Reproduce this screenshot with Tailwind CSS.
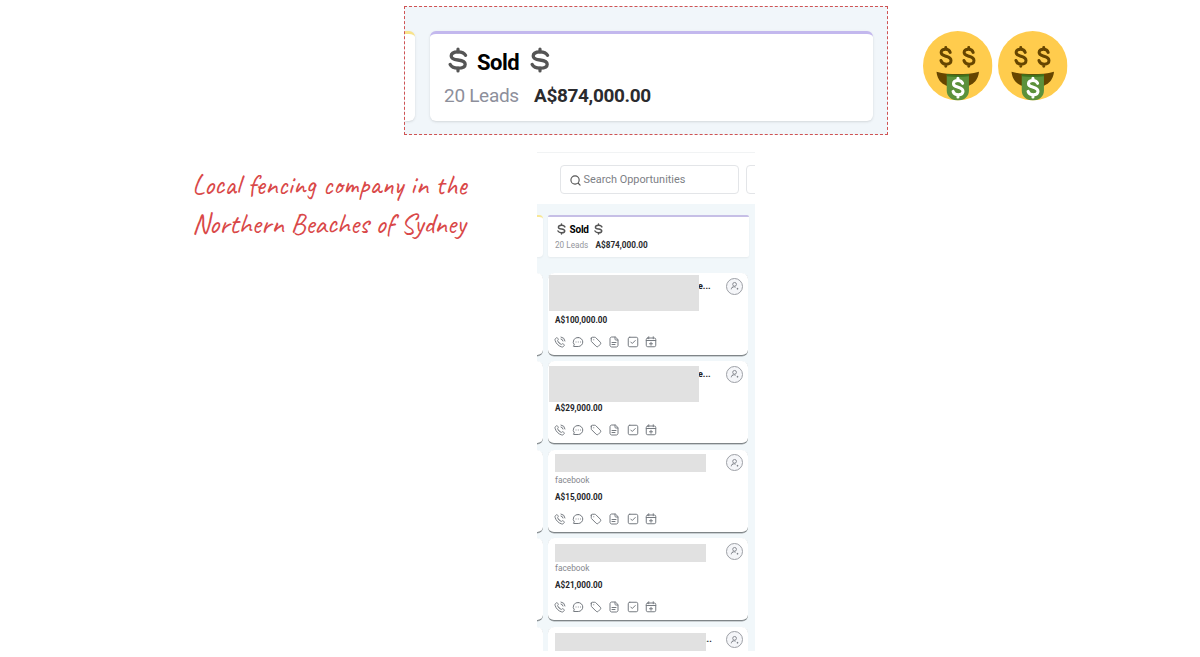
<!DOCTYPE html>
<html lang="en">
<head>
  <meta charset="UTF-8">
  <meta name="viewport" content="width=device-width, initial-scale=1.0">
  <title>Sold Opportunities</title>
  <script src="https://cdn.jsdelivr.net/npm/@tailwindcss/browser@4"></script>
</head>
<body class="bg-white font-['Roboto',sans-serif]">
  <!-- Icons -->
  <svg class="hidden">
    <symbol id="dollar" viewBox="0 0 20 26" fill="none" stroke="currentColor" stroke-linecap="round">
      <path stroke-width="3.3" d="M17.500 8.300C16.200 5.800 13.600 4.900 10 4.900c-4 0-6.800 1.500-6.800 4.100 0 2.800 3 3.500 6.800 4 4 .5 7.200 1.300 7.200 4.200 0 2.600-3 4-7.200 4-4 0-6.500-1.100-7.800-3.700"/>
      <path stroke-width="3.200" d="M10 2v3M10 21v3"/>
    </symbol>
    <symbol id="phone" viewBox="0 0 24 24"><path d="M14.050 6A5 5 0 0 1 18 9.950M14.050 2A9 9 0 0 1 22 9.940M10.230 13.860a14.600 14.600 0 0 1-2.850-4c-.06-.13-.1-.2-.12-.28-.08-.3-.02-.67.17-.92.05-.07.1-.13.22-.24.35-.35.52-.53.64-.7.430-.66.430-1.520 0-2.190-.12-.17-.29-.35-.64-.7l-.2-.2c-.53-.53-.8-.8-1.080-.94a2 2 0 0 0-1.800 0c-.29.140-.55.410-1.080.940l-.16.160c-.53.530-.8.800-1 1.160-.22.400-.38 1.020-.38 1.480 0 .41.080.7.240 1.260a19 19 0 0 0 4.870 8.280 19 19 0 0 0 8.280 4.870c.57.160.850.240 1.260.240.460 0 1.080-.16 1.480-.38.360-.2.630-.47 1.160-1l.16-.16c.53-.53.8-.8.940-1.080a2 2 0 0 0 0-1.800c-.14-.29-.41-.55-.94-1.080l-.2-.2c-.35-.35-.53-.52-.7-.64a2 2 0 0 0-2.190 0c-.17.120-.35.290-.7.640-.11.120-.17.170-.24.220-.25.190-.62.250-.92.170-.08-.02-.15-.05-.28-.12a14.600 14.600 0 0 1-4-2.850z"/></symbol>
    <symbol id="chat" viewBox="0 0 24 24"><path d="M12.500 3a9 9 0 1 1 0 18H3.500c-.8 0-1-.7-.5-1.200l1.800-1.900A9 9 0 0 1 12.500 3zM8 12h.1M12.500 12h.1M17 12h.1"/></symbol>
    <symbol id="tag" viewBox="0 0 24 24"><path d="M2.500 4.500v5c0 .8.300 1.500.9 2.100l9 9a3 3 0 0 0 4.200 0l4-4a3 3 0 0 0 0-4.200l-9-9c-.6-.6-1.300-.9-2.100-.9h-5a2 2 0 0 0-2 2zM7.500 7.500h.1"/></symbol>
    <symbol id="note" viewBox="0 0 24 24"><path d="M14 2.300V6.400c0 .9.700 1.600 1.600 1.600h4.100M16 13H8M14 17H8M14 2H7.500C5.500 2 4 3.500 4 5.500v13C4 20.500 5.500 22 7.500 22h9c2 0 3.500-1.500 3.500-3.500V8z"/></symbol>
    <symbol id="task" viewBox="0 0 24 24"><rect x="2.500" y="2.500" width="19" height="19" rx="3"/><path d="m7.500 12 3 3 6-6"/></symbol>
    <symbol id="calendar" viewBox="0 0 24 24"><path d="M2.500 9h19M7.500 1.500v4M16.500 1.500v4M12 12.500v6M9 15.500h6"/><rect x="2.500" y="4" width="19" height="17.500" rx="3"/></symbol>
    <symbol id="user" viewBox="0 0 24 24"><circle cx="11" cy="8" r="4.500"/><path d="M3 20c.5-4 3-6 6.500-6 1.500 0 3 .3 4 1.200M7 14.500l-3 2M18 16.500v4M16 18.500h4"/></symbol>
    <symbol id="money-face" viewBox="0 0 36 36">
      <circle cx="18" cy="18" r="18" fill="#ffcc4d"/>
      <g fill="none" stroke="#664500" stroke-linecap="round">
        <g id="bill-sign" stroke-width="1.550">
          <path d="M14.100 11.100c-.4-1.200-1.200-1.600-2.400-1.600-1.300 0-2.300.6-2.300 1.700 0 1.300 1.200 1.500 2.500 1.900 1.400.4 2.600.8 2.600 2.200 0 1.300-1.100 1.900-2.500 1.900-1.300 0-2.300-.6-2.700-1.900M11.800 8.500v.8M11.800 17.400v.8"/>
        </g>
        <use href="#bill-sign" x="11.900"/>
      </g>
      <path fill="#664500" d="M7 21.100c3.500 1 7 1.200 11 1.200s7.500-.2 11-1.200c-.4 4-2.800 8.200-11 8.200S7.400 25.100 7 21.100z"/>
      <path fill="#5c913b" d="M12.300 22.800c3.500.5 7.900.5 11.500 0v8.200c0 3-2.500 5-5.700 5s-5.800-2-5.800-5z"/>
      <path fill="#3e721d" d="M12.300 22.300c3.500.5 7.900.5 11.500 0v1.200c-3.500.4-8 .4-11.500 0z"/>
      <path fill="none" stroke="#fff" stroke-width="1.600" stroke-linecap="round" d="M20.500 27.100c-.4-1.100-1.200-1.500-2.400-1.500-1.300 0-2.300.6-2.300 1.700 0 1.300 1.200 1.500 2.400 1.800 1.400.4 2.500.8 2.500 2.100 0 1.200-1 1.800-2.400 1.800-1.300 0-2.300-.5-2.700-1.700M18.100 24.500v1M18.100 33.200v1"/>
    </symbol>
  </svg>

  <main class="w-[1200px] h-[657px] overflow-hidden">
    <!-- Zoomed-in total -->
    <div class="flex h-[152px] pl-[404px] pt-1.5">
      <section class="flex w-[484px] h-[129px] bg-[#f1f6fa] border border-dashed border-[#cf5353] overflow-hidden">
        <div class="w-[10px] h-[90px] mt-6 bg-white border-t-3 border-[#f8e38b] rounded-r-md shadow-sm"></div>
        <div class="w-[443px] h-[90px] ml-[15px] mt-6 pl-[14px] bg-white border-t-3 border-[#c3b8ee] rounded-md shadow-sm">
          <div class="flex items-center h-[30px] mt-[13px] pl-1 text-[22px] font-bold text-black">
            <svg class="w-5 h-[26px] -mt-1 text-[#555]"><use href="#dollar"/></svg>
            <span class="ml-[9px] w-[43px] tracking-[-0.5px]">Sold</span>
            <svg class="w-5 h-[26px] ml-[10px] -mt-1 text-[#555]"><use href="#dollar"/></svg>
          </div>
          <div class="flex items-center h-[26px] mt-[5px] text-[19px] leading-none">
            <span class="w-[90px] tracking-[-0.3px] text-[#8d8f9b]">20 Leads</span>
            <span class="font-bold tracking-[-0.35px] text-[#2b2b2e]">A$874,000.00</span>
          </div>
        </div>
      </section>
      <div class="flex gap-[5.500px] ml-[35px] pt-[25px]">
        <svg class="size-[69.500px]"><use href="#money-face"/></svg>
        <svg class="size-[69.500px]"><use href="#money-face"/></svg>
      </div>
    </div>

    <div class="flex">
      <p class="w-[345px] ml-[192px] mt-[14px] font-['Caveat',cursive] text-[28.400px] leading-[39px] text-[#d94848] whitespace-nowrap">
        Local fencing company in the<br>
        <span class="tracking-[-0.05px]">Northern Beaches of Sydney</span>
      </p>

      <!-- Pipeline column -->
      <section class="w-[218px] h-[499px] overflow-hidden">
        <div class="flex h-[52px] pt-[12px] pl-[22.500px] border-t border-[#f1f3f4]">
          <div class="flex items-center shrink-0 w-[179px] h-[29px] pt-px pl-[9px] border border-[#e3e5e8] rounded text-[10.900px] text-[#7d8086]">
            <svg class="size-[11px] mr-[3px] text-[#555]" viewBox="0 0 24 24" fill="none" stroke="currentColor" stroke-width="2.500" stroke-linecap="round"><circle cx="11" cy="11" r="9"/><path d="m18 18 4 4"/></svg>
            <span class="mt-px">Search Opportunities</span>
          </div>
          <div class="shrink-0 w-10 h-[29px] ml-[7px] border border-[#e3e5e8] rounded"></div>
        </div>

        <div class="h-[447px] pt-[11px] bg-[#f1f7fa]">
          <div class="flex h-[42px]">
            <div class="w-[6px] bg-white border-t-2 border-[#f8e795] rounded-r-sm shadow-xs"></div>
            <div class="w-[201px] ml-[5px] pl-[7px] bg-white border-t-2 border-[#c6bfe6] rounded-xs shadow-xs">
              <div class="flex items-center h-3 mt-[6px] pl-[2px] text-[10px] font-bold text-black">
                <svg class="w-[9px] h-3 text-[#555]"><use href="#dollar"/></svg>
                <span class="ml-[3.500px] w-5 tracking-[-0.2px]">Sold</span>
                <svg class="w-[9px] h-3 ml-1 text-[#555]"><use href="#dollar"/></svg>
              </div>
              <div class="flex items-center h-3 mt-[4px] text-[8.200px]">
                <span class="w-[40.500px] text-[#94969c]">20 Leads</span>
                <span class="font-bold text-[#2b2b2e]">A$874,000.00</span>
              </div>
            </div>
          </div>
          <div id="cards" class="flex flex-col gap-[5.500px] mt-[16px]"></div>
        </div>
      </section>
    </div>
  </main>

  <script>
    const leads = [
      { title: 'e...', price: 'A$100,000.00', box: [0.5, 2.4, 150.5, 36] },
      { title: 'e...', price: 'A$29,000.00', box: [0.5, 4.5, 150.5, 36.5] },
      { title: '', source: 'facebook', price: 'A$15,000.00', box: [7, 4.5, 150.5, 17.5] },
      { title: '', source: 'facebook', price: 'A$21,000.00', box: [7, 6, 150.5, 17.5] },
      { title: '...', price: '', box: [7, 6.5, 150.5, 30] }
    ];
    const actions = ['phone', 'chat', 'tag', 'note', 'task', 'calendar'];

    document.querySelector('#cards').innerHTML = leads.map(lead => {
      const [left, top, width, height] = lead.box;
      return `
        <div class="flex h-[82.900px]">
          <div class="w-[6px] bg-white border-b border-[#7f8588] rounded-r-md shadow-[0_0.500px_0_#a3a9ab]"></div>
          <article class="relative w-[200px] ml-[5px] pl-[7px] bg-white border-b border-[#7f8588] rounded-md shadow-[0_0.500px_0_#a3a9ab]">
            <div class="flex h-[25px] pt-[4.500px] pr-[5px]">
              <span class="${lead.title === '...' ? 'ml-[149px]' : 'ml-[143px]'} text-[9px] leading-[17px] font-bold text-[#222]">${lead.title}</span>
              <span class="flex items-center justify-center size-[17px] ml-auto bg-[#f5f6f9] border border-[#9da0a6] rounded-full">
                <svg class="size-[10px] fill-none stroke-[#777b82] stroke-2"><use href="#user"/></svg>
              </span>
            </div>
            <div class="h-[10px] text-[8.300px] leading-[10px] text-[#85878d]">${lead.source || ''}</div>
            <div class="h-[10px] mt-[7px] text-[8.200px] leading-[10px] font-bold text-[#252528]">${lead.price}</div>
            <div class="flex gap-[6.100px] mt-[11px] -ml-[0.800px]">
              ${actions.map(name => `<svg class="size-[12px] fill-none stroke-[#767b81] stroke-2" stroke-linecap="round" stroke-linejoin="round"><use href="#${name}"/></svg>`).join('')}
            </div>
            <div class="absolute bg-[#e1e1e1]" style="left:${left}px;top:${top}px;width:${width}px;height:${height}px"></div>
          </article>
        </div>`;
    }).join('');
  </script>
</body>
</html>
